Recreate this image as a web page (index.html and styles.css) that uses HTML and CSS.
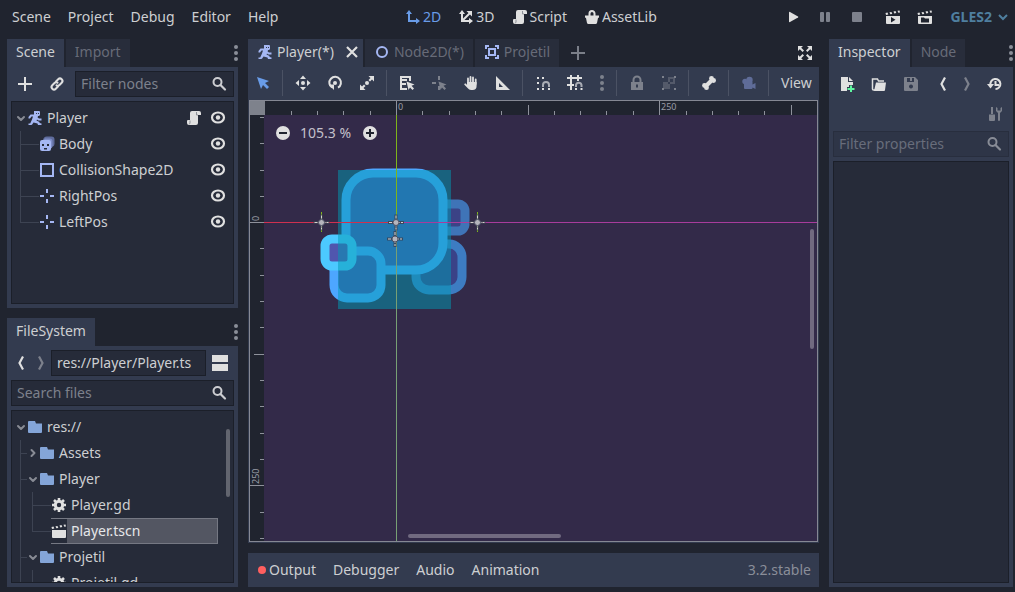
FILE: index.html
```html
<!DOCTYPE html>
<html lang="en">
<head>
<meta charset="utf-8">
<title>Godot Engine</title>
<link rel="stylesheet" href="styles.css">
</head>
<body>
<svg class="defs" aria-hidden="true">
  <symbol id="i-plus" viewBox="0 0 16 16"><path d="M7 1h2v6h6v2H9v6H7V9H1V7h6z"/></symbol>
  <symbol id="i-link" viewBox="0 0 16 16"><g fill="none" stroke="currentColor" stroke-width="2" stroke-linecap="round"><path d="M7 5.500l2.200-2.200a2.400 2.400 0 0 1 3.500 3.500L10.500 9a2.400 2.400 0 0 1-3 .3"/><path d="M9 10.500l-2.200 2.200a2.400 2.400 0 0 1-3.500-3.500L5.500 7a2.400 2.400 0 0 1 3-.3"/></g></symbol>
  <symbol id="i-search" viewBox="0 0 16 16"><circle cx="6.500" cy="6" r="4" fill="none" stroke="currentColor" stroke-width="2"/><path d="M9.500 9l4.500 4.500" stroke="currentColor" stroke-width="2.200" stroke-linecap="round"/></symbol>
  <symbol id="i-dots" viewBox="0 0 16 16"><circle cx="8" cy="2" r="2"/><circle cx="8" cy="8" r="2"/><circle cx="8" cy="14" r="2"/></symbol>
  <symbol id="i-down" viewBox="0 0 12 16"><path d="M3 7l3 3 3-3" fill="none" stroke="currentColor" stroke-width="2" stroke-linecap="round" stroke-linejoin="round"/></symbol>
  <symbol id="i-right" viewBox="0 0 12 16"><path d="M4.500 5l3 3-3 3" fill="none" stroke="currentColor" stroke-width="2" stroke-linecap="round" stroke-linejoin="round"/></symbol>
  <symbol id="i-runner" viewBox="0 0 16 16"><path d="M7 1h5a1 1 0 0 1 1 1v3l-1 1h-1l-.4 1.500L12 8.500h2.500v2h-3L10 9.500l-.5 1 3 1.500v1l2 .500V15h-3.500l-.5-1.500-4-1-1.500 2.300L4 15H1.500v-1.500h1.700L5 9.500l1-3H4.500l-1.500 2H1.500V7l2-2.500H7z"/><path d="M9 3h1v1H9zM11 3h1v1h-1z" fill="#333b4f"/></symbol>
  <symbol id="i-sprite" viewBox="0 0 16 16"><path d="M8 0.500h4.500a3 3 0 0 1 3 3V8a3 3 0 0 1-2 2.800L4 5a4 4 0 0 1 4-4.500z" fill="#5f6c9c"/><path d="M6 2.500h4.500a3 3 0 0 1 3 3V10a3 3 0 0 1-2 2.800L3 6z" fill="#7c8cc6"/><path d="M3 4h7a2 2 0 0 1 2 2v7a2 2 0 0 1-2 2H3a2 2 0 0 1-2-2V6a2 2 0 0 1 2-2z"/><path d="M3 8h2v2H3zM8 8h2v2H8z" fill="#262b39"/><path d="M5 12h3v1.500H5z" fill="#262b39"/></symbol>
  <symbol id="i-square" viewBox="0 0 16 16"><rect x="2" y="2" width="12" height="12" fill="none" stroke="currentColor" stroke-width="2"/></symbol>
  <symbol id="i-position" viewBox="0 0 16 16"><path d="M7 1h2v4H7zM7 11h2v4H7zM1 7h4v2H1zM11 7h4v2h-4z"/></symbol>
  <symbol id="i-script" viewBox="0 0 16 16"><path d="M6 1a2 2 0 0 0-2 2v7H2a1 1 0 0 0-1 1v2a2 2 0 0 0 2 2h7a2 2 0 0 0 2-2V5h3V3a2 2 0 0 0-2-2z"/><path d="M4 10.500V13a1 1 0 0 1-1 1M10.500 2v3H12" fill="none" stroke="#8f9299"/></symbol>
  <symbol id="i-eye" viewBox="0 0 16 16"><ellipse cx="8" cy="7.500" rx="6" ry="5" fill="none" stroke="currentColor" stroke-width="2.200"/><circle cx="8" cy="7.500" r="2.200"/></symbol>
  <symbol id="i-folder" viewBox="0 0 16 16"><path d="M2 2h6l1 2.500h6V13a1 1 0 0 1-1 1H2a1 1 0 0 1-1-1V3a1 1 0 0 1 1-1z"/></symbol>
  <symbol id="i-gear" viewBox="0 0 16 16"><circle cx="8" cy="8" r="3.700" fill="none" stroke="currentColor" stroke-width="3"/><path d="M8 1v3M8 12v3M1 8h3M12 8h3M3 3l2.200 2.200M10.800 10.800L13 13M13 3l-2.200 2.200M5.200 10.800L3 13" stroke="currentColor" stroke-width="2.600"/></symbol>
  <symbol id="i-clap" viewBox="0 0 16 16"><path d="M1 7h14v7a1 1 0 0 1-1 1H2a1 1 0 0 1-1-1z"/><path d="M.500 4l2-.4.800 2-2.300.4zM4.500 3.200l2-.3.800 2-2 .3zM8.500 2.500l2-.4.800 2-2 .3zM12.500 1.800l2-.4.500 2-1.700.3z"/></symbol>
  <symbol id="i-clapplay" viewBox="0 0 16 16"><use href="#i-clap"/><path d="M6 8v5.500l4.500-2.700z" fill="#20242f"/></symbol>
  <symbol id="i-clapopen" viewBox="0 0 16 16"><use href="#i-clap"/><path d="M4 8.500h3l1 1h4V13.500H4z" fill="#20242f"/></symbol>
  <symbol id="i-back" viewBox="0 0 16 16"><path d="M10 1.500L6.500 8l3.500 6.500" fill="none" stroke="currentColor" stroke-width="2.200"/></symbol>
  <symbol id="i-forward" viewBox="0 0 16 16"><path d="M6 1.500L9.500 8 6 14.500" fill="none" stroke="currentColor" stroke-width="2.200"/></symbol>
  <symbol id="i-split" viewBox="0 0 16 16"><path d="M0 0h16v7H0zM0 9h16v7H0z"/></symbol>
  <symbol id="i-2d" viewBox="0 0 16 16"><path d="M4 3v9h9" fill="none" stroke="currentColor" stroke-width="2"/><path d="M4 1l3 4H1zM15 12l-4 3V9z"/></symbol>
  <symbol id="i-3d" viewBox="0 0 16 16"><path d="M4 3v9h9M4 12l8-8" fill="none" stroke="currentColor" stroke-width="2"/><path d="M4 1l3 4H1zM15 12l-4 3V9zM14 2v5.500L8.500 2z"/></symbol>
  <symbol id="i-bag" viewBox="0 0 16 16"><path d="M5.500 7V4.500a2.500 2.500 0 0 1 5 0V7" fill="none" stroke="currentColor" stroke-width="2"/><path d="M1 6.500h14v2l-1 .5-1 5a1.500 1.500 0 0 1-1.500 1h-7A1.500 1.500 0 0 1 3 14L2 9l-1-.5z"/></symbol>
  <symbol id="i-play" viewBox="0 0 16 16"><path d="M4 3.500q0-1 1-.5l8 4.500q.8.500 0 1l-8 4.500q-1 .5-1-.5z"/></symbol>
  <symbol id="i-pause" viewBox="0 0 16 16"><rect x="3" y="3" width="4" height="10" rx="1"/><rect x="9" y="3" width="4" height="10" rx="1"/></symbol>
  <symbol id="i-stop" viewBox="0 0 16 16"><rect x="3" y="3" width="10" height="10" rx="1"/></symbol>
  <symbol id="i-close" viewBox="0 0 16 16"><path d="M3 3l10 10M13 3L3 13" stroke="currentColor" stroke-width="2.200"/></symbol>
  <symbol id="i-ring" viewBox="0 0 16 16"><circle cx="8" cy="8" r="5" fill="none" stroke="currentColor" stroke-width="2"/></symbol>
  <symbol id="i-area" viewBox="0 0 16 16"><path d="M1 1h4v2H3v2H1zM11 1h4v4h-2V3h-2zM1 11h2v2h2v2H1zM13 11h2v4h-4v-2h2z"/><rect x="5" y="5" width="6" height="6" fill="none" stroke="currentColor" stroke-width="2"/></symbol>
  <symbol id="i-expand" viewBox="0 0 16 16"><path d="M1 1h5L4.200 2.800 7 5.600 5.600 7 2.800 4.200 1 6zM15 1v5l-1.800-1.800L10.400 7 9 5.600l2.800-2.800L10 1zM1 15v-5l1.800 1.800L5.600 9 7 10.400l-2.800 2.800L6 15zM15 15h-5l1.800-1.800L9 10.400 10.400 9l2.800 2.800L15 10z"/></symbol>
  <symbol id="i-select" viewBox="0 0 16 16"><path d="M2 2l12 4-4 2 4 4-2 2-4-4-2 4z"/></symbol>
  <symbol id="i-move" viewBox="0 0 16 16"><circle cx="8" cy="8" r="2"/><path d="M8 .5l3 3.500H5zM8 15.500L5 12h6zM.5 8L4 5v6zM15.500 8L12 11V5z"/></symbol>
  <symbol id="i-rotate" viewBox="0 0 16 16"><path d="M5 12.500A5.800 5.800 0 1 1 11 12.700" fill="none" stroke="currentColor" stroke-width="2"/><circle cx="8" cy="8" r="2"/><path d="M1.500 9.500h5.500V15z"/></symbol>
  <symbol id="i-scale" viewBox="0 0 16 16"><circle cx="8" cy="8" r="2"/><path d="M9.500 1H15v5.500l-2-2-2 2L9.500 5l2-2zM1 9.500l2 2 2-2L6.500 11l-2 2 2 2H1z"/></symbol>
  <symbol id="i-list" viewBox="0 0 16 16"><path d="M1 1h11v5h-2V3H3v1h5v2H3v2h4v2H3v3h5v2H1z"/><path d="M7.500 6.500l8 3-3 1.200 2.500 2.800-1.500 1.500L11 12.500 9.500 15z"/></symbol>
  <symbol id="i-pivot" viewBox="0 0 16 16"><path d="M7 1h2v4H7zM7 11h2v4H7zM1 7h4v2H1z"/><path d="M7.500 6.500l8 3-3 1.200 2.500 2.800-1.500 1.500L11 12.500 9.500 15z"/></symbol>
  <symbol id="i-hand" viewBox="0 0 16 16"><path d="M5 9V3.500M7.500 8V2M10 8V2.500M12.700 9V4.500" stroke="currentColor" stroke-width="1.800" stroke-linecap="round"/><path d="M4.100 7h9.500v4a4 4 0 0 1-4 4H8a4 4 0 0 1-3.200-1.700L1.200 9.500q.2-1.500 1.600-1L4.100 10z"/></symbol>
  <symbol id="i-ruler" viewBox="0 0 16 16"><path fill-rule="evenodd" d="M1 1l14 14H2a1 1 0 0 1-1-1zM4 8v4h4z"/></symbol>
  <symbol id="i-snap" viewBox="0 0 16 16"><path d="M2 2h2v2H2zM7 2h2v2H7zM2 7h2v2H2zM2 13h2v2H2z"/><path d="M8 12v-2a3 3 0 0 1 6 0v2" fill="none" stroke="#a9acb4" stroke-width="2"/><path d="M7 13h2v2H7zM13 13h2v2h-2z"/></symbol>
  <symbol id="i-grid" viewBox="0 0 16 16"><path d="M3 0h2v2h5V0h2v2h3v2h-3v2h-2V4H5v5h2v2H5v4H3v-4H0V9h3V4H0V2h3z"/><path d="M9 12v-2a2.800 2.800 0 0 1 5.500 0v2" fill="none" stroke="#a9acb4" stroke-width="2"/><path d="M8 13h2v2H8zM13.500 13h2v2h-2z"/></symbol>
  <symbol id="i-lock" viewBox="0 0 16 16"><path d="M4.500 8V5a3.500 3.500 0 0 1 7 0v3" fill="none" stroke="currentColor" stroke-width="2"/><path fill-rule="evenodd" d="M2 7h12v8H2zM7 9.500h2v3H7z"/></symbol>
  <symbol id="i-group" viewBox="0 0 16 16"><path d="M1 1h2v2H1zM1 13h2v2H1zM13 13h2v2h-2zM13 1h2v2h-2z"/><path d="M7 2h7v7h-2V4H7zM2 7h5v2h2v5H2z" opacity=".45"/><path d="M7 4h2v3H7zM9 7h3v2H9z" opacity=".45"/></symbol>
  <symbol id="i-bone" viewBox="0 0 16 16"><path d="M5 11l6-6" stroke="currentColor" stroke-width="4"/><circle cx="3.500" cy="10.500" r="2.400"/><circle cx="5.500" cy="12.700" r="2.400"/><circle cx="10.500" cy="3.300" r="2.400"/><circle cx="12.600" cy="5.500" r="2.400"/></symbol>
  <symbol id="i-camera" viewBox="0 0 16 16"><circle cx="4" cy="6.500" r="2.700"/><circle cx="8.500" cy="5" r="3.200"/><path d="M3 7h8.500v2.500L14.500 8v6l-3-1.500v.5a1 1 0 0 1-1 1H4a1 1 0 0 1-1-1z"/></symbol>
  <symbol id="i-new" viewBox="0 0 16 16"><path d="M2 1h7v5h5v3h-4v2H8v4H2zM10 1l4 4h-4z"/><path d="M11 9.500h2V12h2.500v2H13v2.500h-2V14H8.500v-2H11z" fill="#5ff5a0"/></symbol>
  <symbol id="i-open" viewBox="0 0 16 16"><path d="M4 14H2.500a1 1 0 0 1-1-1V3h5l1 2H13" fill="none" stroke="currentColor" stroke-width="1.500"/><path d="M5 6.500h10L14 14a1 1 0 0 1-1 1H3z"/></symbol>
  <symbol id="i-save" viewBox="0 0 16 16"><path fill-rule="evenodd" d="M2 1h10l3 3v10a1 1 0 0 1-1 1H2a1 1 0 0 1-1-1V2a1 1 0 0 1 1-1zM4 2v4h7V2H9v3H7V2zM8 8.500a2 2 0 1 0 .01 0z"/></symbol>
  <symbol id="i-history" viewBox="0 0 16 16"><path d="M3.500 9A5 5 0 1 1 8.500 13" fill="none" stroke="currentColor" stroke-width="2"/><path d="M0 8h7l-3.500 4.500z"/><path d="M8.500 5v4H12" fill="none" stroke="currentColor" stroke-width="2"/></symbol>
  <symbol id="i-tools" viewBox="0 0 16 16"><path d="M4 1h2v7H4zM2 8.500h6V14a1 1 0 0 1-1 1H3a1 1 0 0 1-1-1zM9 1v4l2 2v7a1 1 0 0 0 2 0V7l2-2V1l-1.500 1v2.500h-3V2z"/></symbol>
  <g id="marker"><path d="M-1.500-8h3v5h-3zM-1.500 3h3v5h-3zM-8-1.500h5v3h-5zM3-1.500h5v3H3z" fill="#3a3f50" opacity=".8"/><path d="M0-7v14M-7 0H7" stroke="#d6d2cf" stroke-dasharray="3 1"/><circle r="3" fill="#b5b5bd" stroke="#4c5063"/></g>
</svg>

<header class="menubar">
  <nav class="menus">
    <button>Scene</button><button>Project</button><button>Debug</button><button>Editor</button><button>Help</button>
  </nav>
  <nav class="screens">
    <button class="current"><svg class="icon"><use href="#i-2d"/></svg>2D</button>
    <button><svg class="icon"><use href="#i-3d"/></svg>3D</button>
    <button><svg class="icon"><use href="#i-script"/></svg>Script</button>
    <button><svg class="icon"><use href="#i-bag"/></svg>AssetLib</button>
  </nav>
  <div class="run">
    <button class="tool" aria-label="Play"><svg class="icon"><use href="#i-play"/></svg></button>
    <button class="tool dim" aria-label="Pause"><svg class="icon"><use href="#i-pause"/></svg></button>
    <button class="tool dim" aria-label="Stop"><svg class="icon"><use href="#i-stop"/></svg></button>
    <button class="tool run-scene" aria-label="Play scene"><svg class="icon"><use href="#i-clapplay"/></svg></button>
    <button class="tool" aria-label="Play custom scene"><svg class="icon"><use href="#i-clapopen"/></svg></button>
    <button class="renderer">GLES2<svg class="icon" viewBox="0 0 16 16"><path d="M4 6l4 4 4-4" fill="none" stroke="currentColor" stroke-width="2"/></svg></button>
  </div>
</header>

<div class="workspace">
  <div class="column">
    <section class="dock">
      <div class="tabs">
        <button class="tab active">Scene</button><button class="tab">Import</button>
        <button class="more" aria-label="Dock options"><svg class="icon"><use href="#i-dots"/></svg></button>
      </div>
      <div class="panel">
        <div class="row">
          <button class="tool" aria-label="Add node"><svg class="icon"><use href="#i-plus"/></svg></button>
          <button class="tool" aria-label="Instance scene"><svg class="icon"><use href="#i-link"/></svg></button>
          <label class="field"><input type="text" placeholder="Filter nodes" aria-label="Filter nodes"><svg class="icon"><use href="#i-search"/></svg></label>
        </div>
        <div class="tree">
          <ul class="list">
            <li>
              <div class="item"><svg class="arrow"><use href="#i-down"/></svg><span class="name"><svg class="icon node"><use href="#i-runner"/></svg>Player</span>
                <button class="mini" aria-label="Open script"><svg class="icon"><use href="#i-script"/></svg></button><button class="mini" aria-label="Toggle visibility"><svg class="icon"><use href="#i-eye"/></svg></button></div>
              <ul>
                <li class="leaf"><div class="item"><span class="arrow"></span><span class="name"><svg class="icon node"><use href="#i-sprite"/></svg>Body</span><button class="mini" aria-label="Toggle visibility"><svg class="icon"><use href="#i-eye"/></svg></button></div></li>
                <li class="leaf"><div class="item"><span class="arrow"></span><span class="name"><svg class="icon node"><use href="#i-square"/></svg>CollisionShape2D</span><button class="mini" aria-label="Toggle visibility"><svg class="icon"><use href="#i-eye"/></svg></button></div></li>
                <li class="leaf"><div class="item"><span class="arrow"></span><span class="name"><svg class="icon node"><use href="#i-position"/></svg>RightPos</span><button class="mini" aria-label="Toggle visibility"><svg class="icon"><use href="#i-eye"/></svg></button></div></li>
                <li class="leaf"><div class="item"><span class="arrow"></span><span class="name"><svg class="icon node"><use href="#i-position"/></svg>LeftPos</span><button class="mini" aria-label="Toggle visibility"><svg class="icon"><use href="#i-eye"/></svg></button></div></li>
              </ul>
            </li>
          </ul>
        </div>
      </div>
    </section>

    <section class="dock">
      <div class="tabs">
        <button class="tab active">FileSystem</button>
        <button class="more" aria-label="Dock options"><svg class="icon"><use href="#i-dots"/></svg></button>
      </div>
      <div class="panel">
        <div class="row path-row">
          <div class="history">
            <button class="mini" aria-label="Back"><svg class="icon"><use href="#i-back"/></svg></button>
            <button class="mini dim" aria-label="Forward"><svg class="icon"><use href="#i-forward"/></svg></button>
          </div>
          <label class="field"><input type="text" value="res://Player/Player.ts" aria-label="Current path"></label>
          <button class="tool" aria-label="Toggle split mode"><svg class="icon"><use href="#i-split"/></svg></button>
        </div>
        <label class="field"><input type="text" placeholder="Search files" aria-label="Search files"><svg class="icon"><use href="#i-search"/></svg></label>
        <div class="tree files">
          <ul class="list">
            <li>
              <div class="item"><svg class="arrow"><use href="#i-down"/></svg><span class="name"><svg class="icon folder"><use href="#i-folder"/></svg>res://</span></div>
              <ul>
                <li><div class="item"><svg class="arrow"><use href="#i-right"/></svg><span class="name"><svg class="icon folder"><use href="#i-folder"/></svg>Assets</span></div></li>
                <li><div class="item"><svg class="arrow"><use href="#i-down"/></svg><span class="name"><svg class="icon folder"><use href="#i-folder"/></svg>Player</span></div>
                  <ul>
                    <li class="leaf"><div class="item"><span class="arrow"></span><span class="name"><svg class="icon"><use href="#i-gear"/></svg>Player.gd</span></div></li>
                    <li class="leaf"><div class="item"><span class="arrow"></span><span class="name selected"><svg class="icon"><use href="#i-clap"/></svg>Player.tscn</span></div></li>
                  </ul>
                </li>
                <li class="open"><div class="item"><svg class="arrow"><use href="#i-down"/></svg><span class="name"><svg class="icon folder"><use href="#i-folder"/></svg>Projetil</span></div>
                  <ul>
                    <li class="leaf open"><div class="item"><span class="arrow"></span><span class="name"><svg class="icon"><use href="#i-gear"/></svg>Projetil.gd</span></div></li>
                  </ul>
                </li>
              </ul>
            </li>
          </ul>
          <div class="scrollbar"></div>
        </div>
      </div>
    </section>
  </div>

  <main class="column">
    <section class="dock">
      <div class="tabs">
        <button class="tab scene active"><svg class="icon node"><use href="#i-runner"/></svg>Player(*)<svg class="icon close"><use href="#i-close"/></svg></button>
        <button class="tab scene"><svg class="icon node"><use href="#i-ring"/></svg>Node2D(*)</button>
        <button class="tab scene"><svg class="icon node"><use href="#i-area"/></svg>Projetil</button>
        <button class="tool add" aria-label="New scene"><svg class="icon"><use href="#i-plus"/></svg></button>
        <button class="tool expand" aria-label="Distraction free mode"><svg class="icon"><use href="#i-expand"/></svg></button>
      </div>
      <div class="editor">
        <div class="toolbar">
          <button class="tool current" aria-label="Select"><svg class="icon"><use href="#i-select"/></svg></button>
          <span class="sep"></span>
          <button class="tool" aria-label="Move"><svg class="icon"><use href="#i-move"/></svg></button>
          <button class="tool" aria-label="Rotate"><svg class="icon"><use href="#i-rotate"/></svg></button>
          <button class="tool" aria-label="Scale"><svg class="icon"><use href="#i-scale"/></svg></button>
          <span class="sep"></span>
          <button class="tool" aria-label="List selection"><svg class="icon"><use href="#i-list"/></svg></button>
          <button class="tool dim" aria-label="Pivot"><svg class="icon"><use href="#i-pivot"/></svg></button>
          <button class="tool" aria-label="Pan"><svg class="icon"><use href="#i-hand"/></svg></button>
          <button class="tool" aria-label="Ruler"><svg class="icon"><use href="#i-ruler"/></svg></button>
          <span class="sep"></span>
          <button class="tool" aria-label="Smart snap"><svg class="icon"><use href="#i-snap"/></svg></button>
          <button class="tool" aria-label="Grid snap"><svg class="icon"><use href="#i-grid"/></svg></button>
          <button class="tool narrow dim" aria-label="Snap options"><svg class="icon"><use href="#i-dots"/></svg></button>
          <span class="sep"></span>
          <button class="tool dim" aria-label="Lock"><svg class="icon"><use href="#i-lock"/></svg></button>
          <button class="tool dim" aria-label="Group"><svg class="icon"><use href="#i-group"/></svg></button>
          <span class="sep"></span>
          <button class="tool" aria-label="Skeleton"><svg class="icon"><use href="#i-bone"/></svg></button>
          <span class="sep"></span>
          <button class="tool camera" aria-label="Override camera"><svg class="icon"><use href="#i-camera"/></svg></button>
          <span class="sep"></span>
          <button class="view">View</button>
        </div>
        <div class="viewport">
          <svg class="canvas" role="img" aria-label="2D scene">
            <g transform="translate(146 121)">
              <g stroke-width="9">
                <rect x="42" y="-18" width="27" height="27" rx="7" fill="#3b4386" stroke="#3f74b7"/>
                <rect x="20" y="22" width="46" height="46" rx="13" fill="#3a4287" stroke="#3d7cc2"/>
                <rect x="-50" y="-49" width="97" height="97" rx="27" fill="#4454af" stroke="#4da6ff"/>
                <rect x="-62" y="29" width="47" height="47" rx="13" fill="#4454af" stroke="#4da6ff"/>
                <rect x="-71" y="17" width="27" height="27" rx="7" fill="#5056ae" stroke="#4cc9ff"/>
              </g>
              <rect x="-58" y="-52" width="113" height="139" fill="#0099b3" opacity=".5"/>
              <path d="M-132 .5H0" stroke="#d0304f"/>
              <path d="M1 .5H2000" stroke="#a83c9c"/>
              <path d="M.5-107V0" stroke="#7fb51a"/>
              <path d="M.5 1V2000" stroke="#78a074"/>
              <path d="M-74.500-10v20M81.500-10v20" stroke="#7fb51a"/>
              <use href="#marker" x="-74.500" y=".5"/><use href="#marker" x="81.500" y=".5"/>
              <use href="#marker" x="0" y=".5"/><use href="#marker" x="-1" y="17"/>
              <path d="M-146-121H2000V-107H-132V2000H-146z" fill="#20242f"/>
              <path d="M-146-121h15v14h-15z" fill="#7e828c"/>
              <g fill="none" stroke="#8e919b">
                <path d="M-104.500-107v-4M-78.500-107v-4M-52.500-107v-4M-25.500-107v-4M26.500-107v-4M53.500-107v-4M79.500-107v-4M105.500-107v-4M132.500-107v-10M158.500-107v-4M184.500-107v-4M210.500-107v-4M237.500-107v-4M290.500-107v-4M316.500-107v-4M342.500-107v-4M368.500-107v-4M395.500-107v-10M.5-121v14M263.500-121v14"/>
                <path d="M-132-104.500h-4M-132-78.500h-4M-132-51.500h-4M-132-25.500h-4M-132 26.500h-4M-132 53.500h-4M-132 79.500h-4M-132 105.500h-4M-132 132.500h-10M-132 158.500h-4M-132 184.500h-4M-132 211.500h-4M-132 237.500h-4M-132 290.500h-4M-132 316.500h-4M-146 .5h14M-146 263.500h14"/>
              </g>
              <g class="ruler-text">
                <text x="2" y="-112">0</text><text x="265" y="-112">250</text>
                <text transform="translate(-137 -1) rotate(-90)">0</text><text transform="translate(-137 262) rotate(-90)">250</text>
              </g>
            </g>
          </svg>
          <div class="zoom">
            <button aria-label="Zoom out"><svg class="icon" viewBox="0 0 16 16"><circle cx="8" cy="8" r="7"/><path d="M4 7h8v2H4z" fill="#20242f"/></svg></button>
            <button class="level">105.3 %</button>
            <button aria-label="Zoom in"><svg class="icon" viewBox="0 0 16 16"><circle cx="8" cy="8" r="7"/><path d="M4 7h3V4h2v3h3v2H9v3H7V9H4z" fill="#20242f"/></svg></button>
          </div>
          <div class="vbar"></div>
          <div class="hbar"></div>
        </div>
      </div>
    </section>
    <footer class="bottom">
      <button><span class="alert"></span>Output</button>
      <button>Debugger</button>
      <button>Audio</button>
      <button>Animation</button>
      <span class="version">3.2.stable</span>
    </footer>
  </main>

  <div class="column">
    <section class="dock">
      <div class="tabs">
        <button class="tab active">Inspector</button><button class="tab">Node</button>
        <button class="more" aria-label="Dock options"><svg class="icon"><use href="#i-dots"/></svg></button>
      </div>
      <div class="panel">
        <div class="row inspector-tools">
          <button class="tool" aria-label="New resource"><svg class="icon"><use href="#i-new"/></svg></button>
          <button class="tool" aria-label="Open resource"><svg class="icon"><use href="#i-open"/></svg></button>
          <button class="tool dim" aria-label="Save resource"><svg class="icon"><use href="#i-save"/></svg></button>
          <button class="mini first" aria-label="Previous object"><svg class="icon"><use href="#i-back"/></svg></button>
          <button class="mini dim" aria-label="Next object"><svg class="icon"><use href="#i-forward"/></svg></button>
          <button class="tool" aria-label="History"><svg class="icon"><use href="#i-history"/></svg></button>
        </div>
        <div class="row end"><button class="tool dim" aria-label="Object properties"><svg class="icon"><use href="#i-tools"/></svg></button></div>
        <label class="field off"><input type="text" placeholder="Filter properties" aria-label="Filter properties" disabled><svg class="icon"><use href="#i-search"/></svg></label>
        <div class="tree"></div>
      </div>
    </section>
  </div>
</div>
</body>
</html>
```
FILE: styles.css
```css
:root {
  --bg: #20242f;
  --base: #333b4f;
  --inner: #262b39;
  --edge: #1b1f29;
  --text: #cdcfd2;
  --icon: #e0e0e0;
  --dim: #7d818c;
  --accent: #699ce8;
  --node: #a5b7f3;
}

* { box-sizing: border-box; }

body {
  margin: 0;
  height: 100vh;
  display: flex;
  flex-direction: column;
  overflow: hidden;
  background: var(--bg);
  color: var(--text);
  font: 14px/20px "Noto Sans", sans-serif;
}

.defs { position: absolute; width: 0; height: 0; }

button {
  display: flex;
  align-items: center;
  margin: 0;
  padding: 0;
  border: 0;
  background: none;
  color: inherit;
  font: inherit;
  white-space: nowrap;
}

ul { margin: 0; padding: 0; list-style: none; }

.icon { width: 16px; height: 16px; flex: none; fill: currentColor; color: var(--icon); }
.tool { width: 28px; height: 26px; flex: none; justify-content: center; }
.dim .icon { color: var(--dim); }
.current, .current .icon { color: var(--accent); }
.node { color: var(--node); }
.folder { color: #84a5d8; }

/* Menu bar */
.menubar { display: flex; justify-content: space-between; height: 39px; padding: 0 4px 5px; flex: none; }
.menus, .screens, .run { display: flex; align-items: center; }
.menus, .screens { gap: 1px; }
.menus button, .screens button { padding: 0 8px; gap: 2px; }
.screens { padding-right: 4px; }
.run { gap: 4px; }
.run-scene { margin-left: 4px; }
.renderer { gap: 3px; color: #4f7f9f; font-weight: 700; margin-left: 7px; }
.renderer .icon { color: inherit; }

/* Docks */
.workspace {
  flex: 1;
  min-height: 0;
  display: grid;
  grid-template-columns: 231px minmax(0, 1fr) 184px;
  gap: 10px;
  padding: 0 2px 5px 7px;
}
.column { display: flex; flex-direction: column; gap: 10px; min-height: 0; min-width: 0; }
.dock { flex: 1 1 0; min-height: 0; display: flex; flex-direction: column; }
.tabs { display: flex; align-items: center; gap: 2px; height: 28px; flex: none; }
.tab { height: 28px; padding: 0 9px 2px; background: #282d3b; color: #676b78; }
.tab.active { background: var(--base); color: var(--text); }
.tab.scene { gap: 4px; }
.close { margin-left: 6px; margin-right: -6px; }
.more { margin-left: auto; margin-right: -6px; }
.more .icon { color: #8a8e98; }
.add .icon { color: #7b7f89; }
.add { margin-left: 3px; }
.expand { margin-left: auto; }

.panel { flex: 1; min-height: 0; display: flex; flex-direction: column; gap: 4px; padding: 4px; background: var(--base); }
.row { display: flex; align-items: center; gap: 4px; height: 26px; flex: none; }
.path-row { gap: 0; }
.end { justify-content: flex-end; }
.end .tool { height: 34px; }

.field {
  display: flex;
  align-items: center;
  flex: none;
  min-width: 0;
  height: 26px;
  padding: 0 6px 0 5px;
  background: var(--inner);
  border: 1px solid var(--edge);
}
.row .field { flex: 1; }
.field input {
  flex: 1;
  min-width: 0;
  padding: 0;
  border: 0;
  outline: 0;
  background: none;
  color: var(--text);
  font: inherit;
}
.field input::placeholder { color: #7d818c; opacity: 1; }
.field .icon { color: #cccdd1; }
.off { background: #2e3547; border-color: #282e3e; }
.off input::placeholder { color: #686d7b; }
.off .icon { color: #888c96; }
.history { display: flex; gap: 4px; width: 40px; padding-left: 2px; }
.mini { width: 16px; }

/* Trees */
.tree { flex: 1; min-height: 0; display: flex; overflow: hidden; padding: 3px; background: var(--inner); border: 1px solid var(--edge); }
.list { flex: 1; min-width: 0; }
.list ul { padding-left: 12px; }
.list li { position: relative; }
.list ul > li::before {
  content: "";
  position: absolute;
  left: -7px;
  top: 13px;
  width: 7px;
  border-top: 1px solid #3d4352;
}
.list ul > .leaf::before { width: 19px; }
.list ul > li::after {
  content: "";
  position: absolute;
  left: -7px;
  top: 0;
  height: 100%;
  border-left: 1px solid #3d4352;
}
.list ul > li:last-child:not(.open)::after { height: 13px; }
.item { display: flex; align-items: center; gap: 8px; height: 26px; padding-right: 4px; }
.files .item { padding-right: 0; }
.arrow { width: 12px; height: 16px; flex: none; margin-right: -8px; color: #888b94; }
.name { flex: 1; min-width: 0; height: 26px; display: flex; align-items: center; gap: 4px; }
.selected { background: #535662; box-shadow: inset 0 0 0 1px #757883; color: #e6e7e9; }
.selected .icon { height: 24px; padding: 4px 0; background: var(--inner); }
.files { gap: 8px; padding-right: 3px; }
.scrollbar { width: 4px; height: 68px; margin-top: 15px; border-radius: 2px; background: #62656f; }

/* Editor */
.editor { flex: 1; min-height: 0; display: flex; flex-direction: column; padding: 0 1px 1px; background: var(--base); }
.toolbar { display: flex; align-items: center; gap: 4px; height: 33px; padding-bottom: 1px; flex: none; }
.sep { width: 4px; height: 26px; padding-left: 1px; flex: none; }
.sep::before { content: ""; display: block; width: 1px; height: 26px; background: #4b5264; }
.narrow { width: 18px; }
.camera .icon { color: #5f6c98; }
.view { padding: 0 6px; }
.viewport { position: relative; flex: 1; min-height: 0; overflow: hidden; background: #332a49; border: 1px solid #858893; }
.canvas { display: block; width: 100%; height: 100%; }
.ruler-text { font-size: 9px; fill: #9a9ca6; }
.zoom { position: absolute; left: 25px; top: 22px; display: flex; align-items: center; }
.level { margin: 0 11px 0 9px; color: #c4c0cb; }
.vbar { position: absolute; right: 3px; top: 128px; width: 4px; height: 120px; border-radius: 2px; background: #716a80; }
.hbar { position: absolute; left: 158px; bottom: 3px; width: 153px; height: 4px; border-radius: 2px; background: #716a80; }

.bottom { display: flex; align-items: center; gap: 17px; height: 34px; flex: none; padding: 0 8px 0 10px; background: var(--base); }
.alert { width: 8px; height: 8px; margin-right: 3px; border-radius: 50%; background: #ff5f5f; }
.version { margin-left: auto; color: #8a8e99; }

.inspector-tools .mini { width: 20px; justify-content: center; }
.inspector-tools .first { margin-left: auto; }
```
